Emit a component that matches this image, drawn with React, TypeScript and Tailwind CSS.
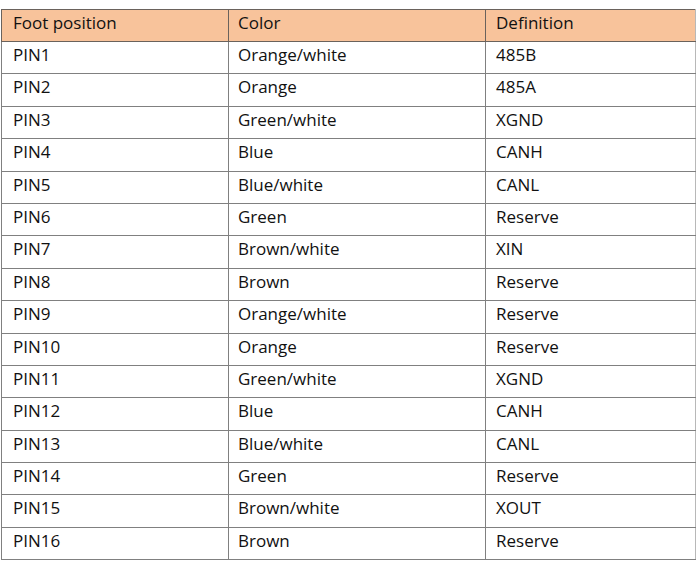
const rows: [string, string, string][] = [
  ["PIN1", "Orange/white", "485B"],
  ["PIN2", "Orange", "485A"],
  ["PIN3", "Green/white", "XGND"],
  ["PIN4", "Blue", "CANH"],
  ["PIN5", "Blue/white", "CANL"],
  ["PIN6", "Green", "Reserve"],
  ["PIN7", "Brown/white", "XIN"],
  ["PIN8", "Brown", "Reserve"],
  ["PIN9", "Orange/white", "Reserve"],
  ["PIN10", "Orange", "Reserve"],
  ["PIN11", "Green/white", "XGND"],
  ["PIN12", "Blue", "CANH"],
  ["PIN13", "Blue/white", "CANL"],
  ["PIN14", "Green", "Reserve"],
  ["PIN15", "Brown/white", "XOUT"],
  ["PIN16", "Brown", "Reserve"],
];

export default function App() {
  return (
    <div
      className="w-[696px] h-[562px] bg-white pt-[9px] pl-px text-[#111] text-[17px] leading-[24px]"
      style={{ fontFamily: "'Open Sans', Lato, sans-serif" }}
    >
      <table className="border-collapse table-fixed w-[694px]">
        <colgroup>
          <col className="w-[227px]" />
          <col className="w-[257px]" />
          <col className="w-[210px]" />
        </colgroup>
        <thead>
          <tr className="h-[32px] bg-[#f8c39b]">
            <th className="border border-[#6a625c] text-left font-normal align-top pl-[11px] pt-[1px]">Foot position</th>
            <th className="border border-[#6a625c] text-left font-normal align-top pl-[9px] pt-[1px]">Color</th>
            <th className="border border-[#6a625c] border-r-[#b8b8b8] text-left font-normal align-top pl-[10px] pt-[1px]">Definition</th>
          </tr>
        </thead>
        <tbody>
          {rows.map(([pin, color, def]) => (
            <tr key={pin} className="h-[32.4px]">
              <td className="border border-[#808080] align-top pl-[11px] pt-[1px]">{pin}</td>
              <td className="border border-[#808080] align-top pl-[9px] pt-[1px]">{color}</td>
              <td className="border border-[#808080] border-r-[#b8b8b8] align-top pl-[10px] pt-[1px]">{def}</td>
            </tr>
          ))}
        </tbody>
      </table>
    </div>
  );
}
